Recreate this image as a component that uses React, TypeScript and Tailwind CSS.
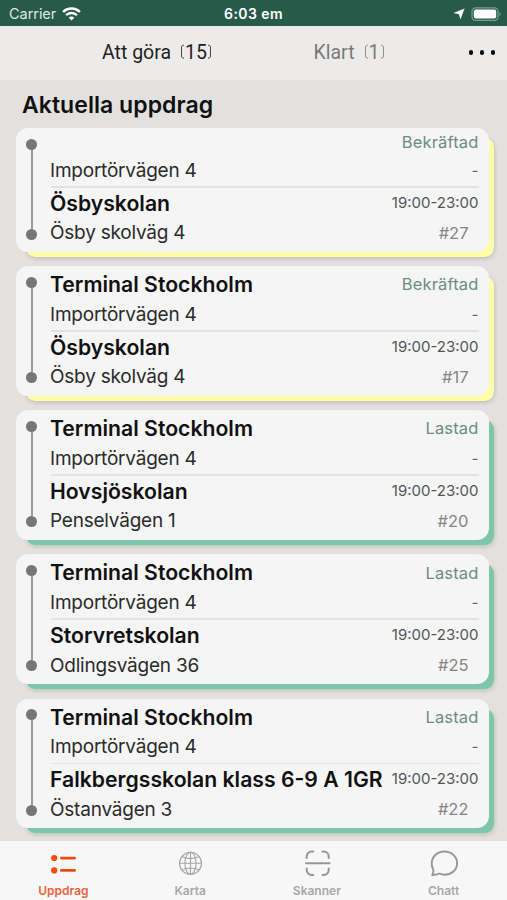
import clsx from 'clsx'

type Job = {
  id: number
  from: string
  fromAddress: string
  to: string
  toAddress: string
  status: string
  time: string
}

const jobs: Job[] = [
  { id: 27, from: '', fromAddress: 'Importörvägen 4', to: 'Ösbyskolan', toAddress: 'Ösby skolväg 4', status: 'Bekräftad', time: '19:00-23:00' },
  { id: 17, from: 'Terminal Stockholm', fromAddress: 'Importörvägen 4', to: 'Ösbyskolan', toAddress: 'Ösby skolväg 4', status: 'Bekräftad', time: '19:00-23:00' },
  { id: 20, from: 'Terminal Stockholm', fromAddress: 'Importörvägen 4', to: 'Hovsjöskolan', toAddress: 'Penselvägen 1', status: 'Lastad', time: '19:00-23:00' },
  { id: 25, from: 'Terminal Stockholm', fromAddress: 'Importörvägen 4', to: 'Storvretskolan', toAddress: 'Odlingsvägen 36', status: 'Lastad', time: '19:00-23:00' },
  { id: 22, from: 'Terminal Stockholm', fromAddress: 'Importörvägen 4', to: 'Falkbergsskolan klass 6-9 A 1GR', toAddress: 'Östanvägen 3', status: 'Lastad', time: '19:00-23:00' },
]

function StatusBar() {
  return (
    <div className="flex h-[25.5px] shrink-0 items-center bg-[#275a49] px-[9px] pt-[2px] text-white">
      <div className="flex flex-1 items-center gap-[6px]">
        <span className="text-[14.5px] tracking-[-0.05px] text-[#dfe8e4]">Carrier</span>
        <svg width="19" height="14" viewBox="0 0 19 14" fill="none" stroke="currentColor" strokeWidth="2.4">
          <path d="M1.1 5a12 12 0 0 1 16.8 0" />
          <path d="M4.1 8.2a7.7 7.7 0 0 1 10.8 0" />
          <path d="M9.5 13.6 6.7 10.8a4 4 0 0 1 5.6 0z" fill="currentColor" stroke="none" />
        </svg>
      </div>
      <span className="text-[14px] font-semibold tracking-[0.4px]">6:03 em</span>
      <div className="flex flex-1 items-center justify-end gap-[6px]">
        <svg width="12" height="12" viewBox="0 0 12 12" fill="currentColor">
          <path d="M11.6.4 7.4 11.6 6 6.200.4 5z" />
        </svg>
        <svg width="31" height="14" viewBox="0 0 31 14" className="-mr-[4px]">
          <rect x="1" y=".8" width="26" height="12.6" rx="3.6" fill="none" stroke="#7d9f92" strokeWidth="1.2" />
          <rect x="2.8" y="2.6" width="22.4" height="9" rx="2" fill="#fff" />
          <path d="M28.4 5v4.2c1.6-.6 1.6-3.6 0-4.2z" fill="#7d9f92" />
        </svg>
      </div>
    </div>
  )
}

function Bracket({ close }: { close?: boolean }) {
  return (
    <svg width="4" height="16" viewBox="0 0 4 16" fill="none" stroke="currentColor" strokeWidth="1" className={clsx('-mt-[1px] opacity-80', close && '-scale-x-100')}>
      <path d="M4 .9 1.5 2.4v10.6L4 14.500" />
    </svg>
  )
}

function Tab({ label, count, className }: { label: string; count: number; className: string }) {
  return (
    <button className={clsx('flex items-center font-[Roboto,sans-serif] text-[19.5px] leading-6', className)}>
      <span className="mr-[9px]">{label}</span>
      <Bracket />
      <span className="mx-[1px]">{count}</span>
      <Bracket close />
    </button>
  )
}

function TopTabs() {
  return (
    <div className="flex h-[54px] shrink-0 items-center bg-[#edebea] pl-[102px] pr-[12px]">
      <Tab label="Att göra" count={15} className="w-[211.5px] text-[#1f1f1f]" />
      <Tab label="Klart" count={1} className="text-[#7b7978]" />
      <button className="ml-auto flex gap-[6.5px]">
        <span className="size-[4.5px] rounded-full bg-black" />
        <span className="size-[4.5px] rounded-full bg-black" />
        <span className="size-[4.5px] rounded-full bg-black" />
      </button>
    </div>
  )
}

function JobCard({ job }: { job: Job }) {
  const loaded = job.status === 'Lastad'
  return (
    <div
      className={clsx(
        'flex w-[473px] rounded-[12px] bg-[#f5f5f5]',
        job.from ? 'h-[129.7px] pt-[4px]' : 'h-[123.5px] pt-[1px]',
        loaded
          ? 'shadow-[7.5px_7.5px_0_-2.5px_#7cc6ac,8px_9px_4px_-2px_rgba(0,0,0,0.14)]'
          : 'shadow-[7.5px_7.5px_0_-2.5px_#fbfea6,8px_9px_4px_-2px_rgba(0,0,0,0.14)]'
      )}
    >
      <div className={clsx('flex w-[34.5px] flex-col items-center pr-[3.5px]', job.from ? 'h-[113px] pt-[6.5px]' : 'h-[110.5px] pt-[9.5px]')}>
        <span className="size-[11px] shrink-0 rounded-full bg-[#777576]" />
        <span className="w-[2px] flex-1 bg-[#9b9999]" />
        <span className="size-[11px] shrink-0 rounded-full bg-[#777576]" />
      </div>
      <div className="flex-1 pr-[10.500px]">
        <div className={clsx('flex items-center justify-between', job.from ? 'h-[30px]' : 'h-[28px]')}>
          <span className="-ml-[0.5px] text-[21.2px] font-semibold text-[#111]">{job.from}</span>
          <span className="-mt-[1px] text-[16.5px] tracking-[0.15px] text-[#6c8d7f]">{job.status}</span>
        </div>
        <div className={clsx('flex items-center justify-between', job.from ? 'h-[30px]' : 'h-[29px]')}>
          <span className="-ml-[0.5px] text-[19px] tracking-[-0.22px] text-[#2b2b2b]">{job.fromAddress}</span>
          <span className="text-[15px] text-[#666]">-</span>
        </div>
        <div className="h-[1.5px] bg-[#e2e2e1]" />
        <div className="flex h-[31px] items-center justify-between whitespace-nowrap pt-[1px]">
          <span className="-ml-[0.5px] text-[21.2px] font-semibold text-[#111]">{job.to}</span>
          <span className="-mt-[1px] text-[15px] text-[#555]">{job.time}</span>
        </div>
        <div className="flex h-[30px] items-center justify-between">
          <span className="-ml-[0.5px] text-[19px] tracking-[-0.22px] text-[#2b2b2b]">{job.toAddress}</span>
          <span className="-mt-[1px] pr-[10px] text-[16.5px] text-[#858585]">#{job.id}</span>
        </div>
      </div>
    </div>
  )
}

function BottomNav() {
  return (
    <div className="grid h-[59px] shrink-0 grid-cols-4 bg-[#f7f7f7] text-[12px] font-semibold leading-4 text-[#a8a8a8]">
      <div className="flex flex-col items-center pt-[9px] text-[#e8643a]">
        <svg width="28" height="28" viewBox="0 0 28 28" fill="#e84e12">
          <circle cx="5.2" cy="8" r="3.1" />
          <circle cx="5.2" cy="20.4" r="3.1" />
          <rect x="11" y="6.8" width="16" height="2.6" rx="1.3" />
          <rect x="11" y="19.1" width="16" height="2.6" rx="1.3" />
        </svg>
        <span className="mt-[5px]">Uppdrag</span>
      </div>
      <div className="flex flex-col items-center pt-[8px]">
        <svg width="28" height="28" viewBox="0 0 28 28" fill="none" stroke="#a5a5a5" strokeWidth="1.1">
          <circle cx="14.5" cy="14.3" r="11" />
          <ellipse cx="14.5" cy="14.3" rx="5.6" ry="11" />
          <path d="M14.5 3.3v22M3.5 14.3h22M5.7 7.6c5 2.7 12.6 2.7 17.6 0M5.7 21c5-2.7 12.6-2.7 17.6 0" />
        </svg>
        <span className="mt-[6px]">Karta</span>
      </div>
      <div className="flex flex-col items-center pt-[8px]">
        <svg width="28" height="28" viewBox="0 0 28 28" fill="none" stroke="#969696" strokeWidth="2" strokeLinecap="round">
          <path d="M3 14.300h23.500M3.700 9V7.500a5 5 0 0 1 5-5h1.500M19.500 2.500h1.200a5 5 0 0 1 5 5V9M3.700 19.500V21a5 5 0 0 0 5 5h1.500M19.500 26h1.200a5 5 0 0 0 5-5v-1.500" />
        </svg>
        <span className="mt-[6px]">Skanner</span>
      </div>
      <div className="flex flex-col items-center pt-[8px]">
        <svg width="28" height="28" viewBox="0 0 28 28" fill="none" stroke="#969696" strokeWidth="1.9" strokeLinejoin="round">
          <path d="M2.200 26c1.100-1.800 1.500-3.700 1-5.600-1-1.700-1.500-3.600-1.500-5.800 0-6.900 5.500-12.100 12.600-12.100s12.800 5 12.800 11.800-5.700 11.400-12.300 11.400c-2 0-3.600-.4-5.300-1.200-2.200 1-4.700 1.500-7.300 1.500z" />
        </svg>
        <span className="mt-[6px]">Chatt</span>
      </div>
    </div>
  )
}

export default function App() {
  return (
    <div className="flex h-[900px] w-[507px] flex-col overflow-hidden bg-[#e3e1df] font-[Inter,sans-serif]">
      <StatusBar />
      <TopTabs />
      <div className="flex-1 overflow-hidden pl-[16px]">
        <h1 className="flex h-[48.5px] items-center pl-[6px] pt-[3px] text-[23px] font-semibold tracking-[0.05px] text-[#111]">Aktuella uppdrag</h1>
        <div className="flex flex-col gap-[14.5px]">
          {jobs.map((job) => (
            <JobCard key={job.id} job={job} />
          ))}
        </div>
      </div>
      <BottomNav />
    </div>
  )
}
